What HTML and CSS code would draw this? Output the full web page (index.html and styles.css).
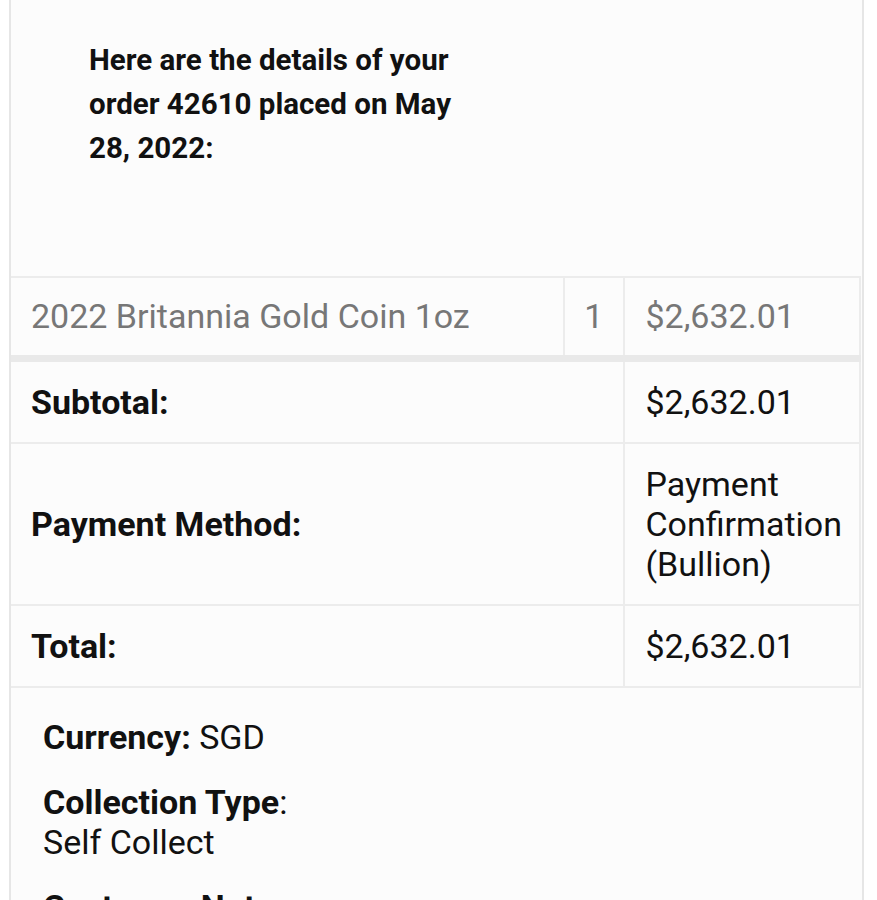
FILE: index.html
```html
<!DOCTYPE html>
<html>
<head>
<meta charset="utf-8">
<link rel="stylesheet" href="styles.css">
</head>
<body>
<div class="mail">
  <h2 class="intro">Here are the details of your order 42610 placed on May 28, 2022:</h2>
  <table class="order">
    <tr class="item">
      <td class="name">2022 Britannia Gold Coin 1oz</td>
      <td class="qty">1</td>
      <td class="price">$2,632.01</td>
    </tr>
    <tr>
      <th colspan="2">Subtotal:</th>
      <td class="price">$2,632.01</td>
    </tr>
    <tr>
      <th colspan="2">Payment Method:</th>
      <td class="price">Payment Confirmation (Bullion)</td>
    </tr>
    <tr>
      <th colspan="2">Total:</th>
      <td class="price">$2,632.01</td>
    </tr>
  </table>
  <div class="meta">
    <p><strong>Currency:</strong> SGD</p>
    <p><strong>Collection Type</strong>:<br>Self Collect</p>
    <p><strong>Customer Note:</strong></p>
  </div>
</div>
</body>
</html>
```

FILE: styles.css
```css
html, body {
  margin: 0;
  padding: 0;
  background: #ffffff;
}

body {
  font-family: Roboto, "Liberation Sans", sans-serif;
  color: #111111;
  overflow: hidden;
  height: 900px;
}

.mail {
  margin-left: 9px;
  width: 851px;
  background: #fcfcfc;
  border-left: 2px solid #e6e6e6;
  border-right: 2px solid #e6e6e6;
  min-height: 1000px;
}

.intro {
  margin: 0;
  padding: 38px 0 106px 78px;
  width: 385px;
  font-size: 29.5px;
  line-height: 44px;
  font-weight: 700;
  color: #111111;
}

.order {
  border-collapse: collapse;
  width: 850px;
  font-size: 34px;
  line-height: 40px;
}

.order td,
.order th {
  border: 2px solid #ececec;
  padding: 20px 20px;
  text-align: left;
  vertical-align: middle;
}

.order th {
  font-weight: 700;
  color: #111111;
}

.order td:first-child,
.order th:first-child {
  border-left: none;
}

.order .item td {
  color: #777777;
  padding-top: 18px;
  padding-bottom: 19px;
  border-bottom: 7px solid #e9e9e9;
}

.order .name {
  width: 511px;
}

.order .qty {
  width: 20px;
  padding-left: 19px;
  padding-right: 19px;
}

.order .price {
  width: 197px;
  padding-left: 20px;
  padding-right: 16px;
  color: #111111;
}

.order .item .price {
  color: #777777;
}

.meta {
  padding: 29px 0 0 32px;
  font-size: 34px;
  line-height: 40px;
}

.meta p {
  margin: 0 0 25px 0;
}

.meta strong {
  font-weight: 700;
}
```
